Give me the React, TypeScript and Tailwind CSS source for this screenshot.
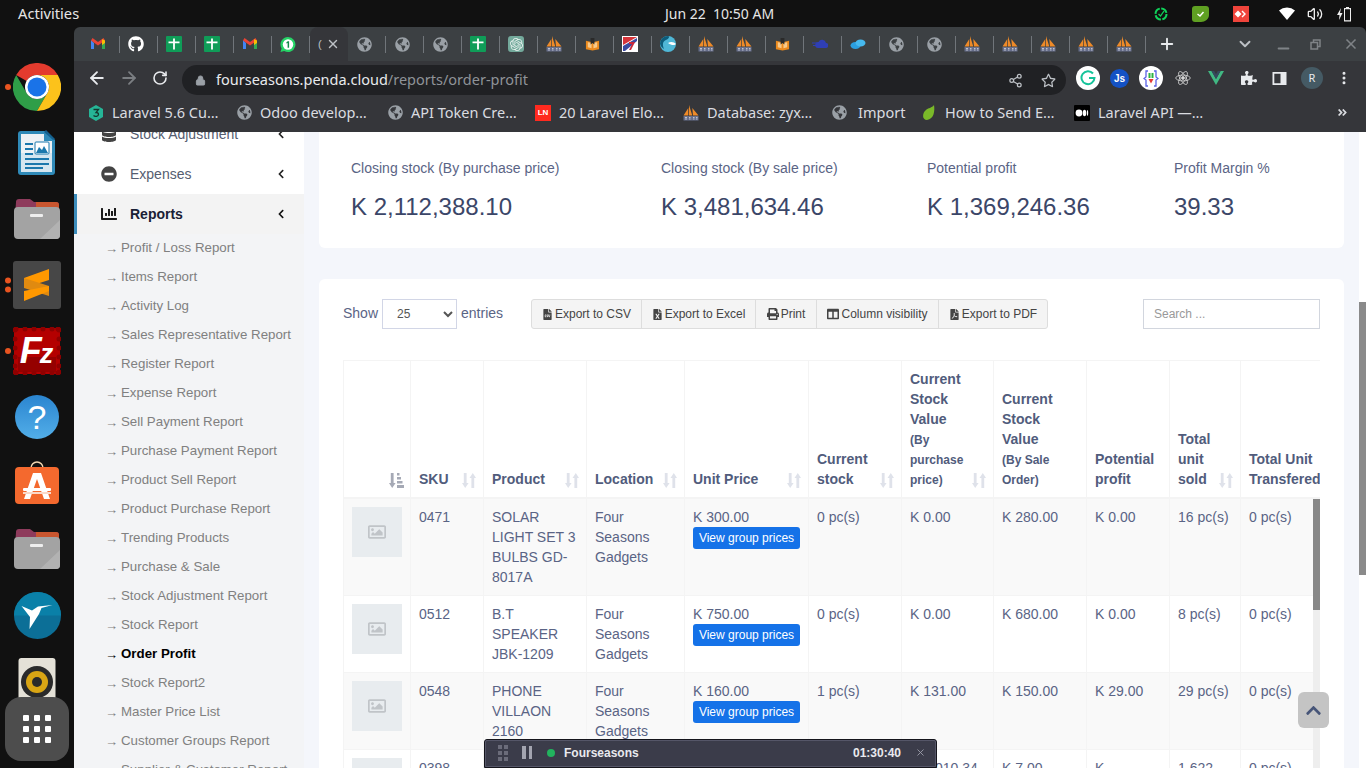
import React from "react";
import {
  FaAngleDoubleRight,
  FaChartBar,
  FaChevronLeft,
  FaChevronUp,
  FaColumns,
  FaDatabase,
  FaFileCsv,
  FaFileExcel,
  FaFilePdf,
  FaGithub,
  FaGlobeAmericas,
  FaMinusCircle,
  FaPrint,
  FaPuzzlePiece,
  FaRegImage,
  FaRegStar,
} from "react-icons/fa";
import { SiOpenai } from "react-icons/si";
import { ArrowLeft, ArrowRight, ChevronDown, Lock, Minus, MoreVertical, Plus, RotateCw, Share2, Volume2, X } from "lucide-react";

const Gmail = () => (
  <svg width="16" height="16" viewBox="0 0 16 16">
    <path d="M1 4v9h3V7z" fill="#4285f4" />
    <path d="M12 7v6h3V4z" fill="#34a853" />
    <path d="M1 4.500 8 9.500l7-5L13.500 2 8 6 2.500 2z" fill="#ea4335" />
    <path d="M12 3.200 15 4.500V7l-3 2z" fill="#fbbc04" />
  </svg>
);
const Sheets = () => (
  <svg width="16" height="16" viewBox="0 0 16 16">
    <rect width="16" height="16" rx="1" fill="#0f9d58" />
    <path d="M7.100 2.500h1.800v3h4.600v1.800H8.900v6.200H7.100V7.300H2.500V5.500h4.600z" fill="#fff" />
  </svg>
);
const Whatsapp = () => (
  <svg width="17" height="17" viewBox="0 0 16 16">
    <path d="M8 .500a7.500 7.500 0 0 0-6.400 11.400L.500 15.500l3.700-1A7.500 7.500 0 1 0 8 .500z" fill="#25d366" />
    <circle cx="8" cy="8" r="5.200" fill="#fff" />
    <path d="M7.800 4.800h1.300v6.400H7.600V6.400l-1.200.5V5.700z" fill="#128c4b" />
  </svg>
);
const Globe = () => <FaGlobeAmericas size={15} color="#9aa0a6" />;
const Sail = () => (
  <svg width="16" height="16" viewBox="0 0 16 16">
    <path d="M.500 10.500 5.300 3v7.500zM6 10.500V0l3.300 10.500zM10 10.500 9.300 3 15.500 10.500z" fill="#ee8a28" />
    <rect x="0.500" y="11" width="15" height="4.500" fill="#676f8c" />
    <path d="M2 12.500h2M2 14h2M6 12.500h1.500M6 14h1.500M10 12.500h1.500M10 14h1.500M13 12.500h1.500M13 14h1.500" stroke="#d5d8e0" strokeWidth=".8" />
  </svg>
);
const Book = () => (
  <svg width="15" height="15" viewBox="0 0 16 16">
    <path d="M1 4l7 1.500L15 4v9l-7 1.500L1 13z" fill="#ec8a1d" />
    <path d="M3 5.500l4 1v5.500l-4-1zM13 5.500l-4 1v5.500l4-1z" fill="#f7c98a" />
    <path d="M6 1h4v7l-2-1.500L6 8z" fill="#2a2a2a" />
  </svg>
);
const Flag = () => (
  <svg width="16" height="16" viewBox="0 0 16 16">
    <rect width="16" height="16" fill="#fff" />
    <path d="M1 1h14L1 9z" fill="#d6343a" />
    <path d="M1 10 15 2v3L3 15H1z" fill="#3b4aa0" />
    <path d="M7 6h6l-4 8H7l3-6H7z" fill="#c9283a" />
  </svg>
);
const Swirl = () => (
  <svg width="16" height="16" viewBox="0 0 16 16">
    <circle cx="8" cy="8" r="8" fill="#4fb7d6" />
    <path d="M0 8a8 8 0 0 1 8-8c2 0 1 3-2 4S2 8 4 13A8 8 0 0 1 0 8z" fill="#0d5c7a" />
    <path d="M8 7c3-2 6-1 8 1-1 1-4 2-8-1z" fill="#fff" />
  </svg>
);
const Cloud = () => (
  <svg width="16" height="16" viewBox="0 0 16 16">
    <path d="M6 12a3 3 0 0 1 .5-6A4 4 0 0 1 14 7a2.500 2.500 0 0 1-.5 5z" fill="#2f3fb5" />
    <path d="M0 7h5M1 9.500h4" stroke="#2f3fb5" strokeWidth="1.200" />
  </svg>
);
const Blobs = () => (
  <svg width="16" height="16" viewBox="0 0 16 16">
    <ellipse cx="5.500" cy="9.500" rx="5" ry="3.500" fill="#2b9fe0" />
    <ellipse cx="10.500" cy="7" rx="5" ry="3.500" fill="#46b9ee" />
  </svg>
);
const OpenAi = () => (
  <span className="flex h-4 w-4 items-center justify-center rounded-[3px] bg-[#74aa9c]">
    <SiOpenai size={13} color="#e8f2ef" />
  </span>
);

const tabs: React.ReactNode[] = [
  <Gmail />, <FaGithub size={16} color="#fff" />, <Sheets />, <Sheets />, <Gmail />, <Whatsapp />, null,
  <Globe />, <Globe />, <Globe />, <Sheets />, <OpenAi />, <Sail />, <Book />, <Flag />, <Swirl />, <Sail />, <Sail />,
  <Book />, <Cloud />, <Blobs />, <Globe />, <Globe />, <Sail />, <Sail />, <Sail />, <Sail />, <Sail />,
];

const bookmarks: { icon: React.ReactNode; label: string; w: string }[] = [
  {
    icon: (
      <svg width="16" height="16" viewBox="0 0 16 16">
        <path d="M8 0l7 4v8l-7 4-7-4V4z" fill="#26b597" />
        <path d="M5.500 4.500h5L8 7.500c2 0 2.500 1 2.500 2 0 2-3.500 2.500-5 1" fill="none" stroke="#14382f" strokeWidth="1.300" />
      </svg>
    ),
    label: "Laravel 5.6 Cu…",
    w: "w-[148px]",
  },
  { icon: <Globe />, label: "Odoo develop…", w: "w-[151px]" },
  { icon: <Globe />, label: "API Token Cre…", w: "w-[148px]" },
  {
    icon: (
      <span className="flex h-4 w-4 items-center justify-center bg-[#ff2a1f] font-['Liberation_Sans'] text-[8px] font-bold text-white">
        LN
      </span>
    ),
    label: "20 Laravel Elo…",
    w: "w-[148px]",
  },
  { icon: <Sail />, label: "Database: zyx…", w: "w-[148px]" },
  { icon: <Globe />, label: "Import", w: "w-[90px]" },
  {
    icon: (
      <svg width="16" height="16" viewBox="0 0 16 16">
        <path d="M13 0c1 6 0 14-7 15C1 15 1 8 5 5c2-2 6-2 8-5z" fill="#7ab929" />
      </svg>
    ),
    label: "How to Send E…",
    w: "w-[153px]",
  },
  {
    icon: (
      <svg width="16" height="16" viewBox="0 0 16 16">
        <rect width="16" height="16" rx="1" fill="#000" />
        <circle cx="5" cy="8" r="3.400" fill="#fff" />
        <ellipse cx="10.500" cy="8" rx="1.700" ry="3.200" fill="#fff" />
        <ellipse cx="13.500" cy="8" rx=".7" ry="2.900" fill="#fff" />
      </svg>
    ),
    label: "Laravel API —…",
    w: "w-[140px]",
  },
];

const Chrome = () => (
  <svg width="48" height="48" viewBox="0 0 48 48">
    <path d="M3.200 12 13.600 30A12 12 0 0 0 34.400 30L24 48A24 24 0 0 1 3.200 12z" fill="#2f9e48" />
    <path d="M44.800 12A24 24 0 0 1 24 48L34.400 30A12 12 0 0 0 24 12z" fill="#fcc21b" />
    <path d="M3.200 12A24 24 0 0 1 44.800 12H24A12 12 0 0 0 13.600 18z" fill="#e33b2e" />
    <circle cx="24" cy="24" r="12" fill="#fff" />
    <circle cx="24" cy="24" r="9.500" fill="#1a73e8" />
  </svg>
);
const Writer = () => (
  <svg width="38" height="46" viewBox="0 0 38 46">
    <path d="M3 1h25l9 9v32a3 3 0 0 1-3 3H3a3 3 0 0 1-3-3V4a3 3 0 0 1 3-3z" fill="#2f8ab8" />
    <path d="M3 4h23v7h8v31H3z" fill="#eef2f5" />
    <path d="M3 23h31v19H3z" fill="#d5e6f0" />
    <path d="M28 0l9 9-2 1-9-8z" fill="#14618f" />
    <path d="M7 13h8v2H7zM7 18h8v2H7zM7 23h8v2H7zM7 28h24v2H7zM7 33h24v2H7zM7 37h18v2H7z" fill="#1b78ad" />
    <rect x="17" y="12" width="14" height="12" rx="1" fill="#fff" stroke="#1b78ad" />
    <path d="M18 23l3-6 3 3 2-4 4 7z" fill="#1b78ad" />
  </svg>
);
const Folder = () => (
  <svg width="46" height="42" viewBox="0 0 46 42">
    <path d="M2 4a3 3 0 0 1 3-3h11l4 3h22a3 3 0 0 1 3 3v12H1z" fill="#8e3b5c" />
    <path d="M22 4h20a3 3 0 0 1 3 3v8H22z" fill="#c9562f" />
    <rect x="0" y="9" width="46" height="32" rx="4" fill="#a3a3a3" />
    <path d="M46 22v15a4 4 0 0 1-4 4H26z" fill="#b2b2b2" />
    <rect x="16" y="16" width="13" height="3" rx="1" fill="#eee" />
  </svg>
);
const Sublime = () => (
  <span className="flex h-12 w-12 items-center justify-center rounded-[3px] bg-[#474747]">
    <svg width="26" height="32" viewBox="0 0 26 32">
      <path d="M25 0v11L0 19V9z" fill="#ff9800" />
      <path d="M0 9 25 17v10L0 19z" fill="#e08a10" />
      <path d="M25 17v5L0 32V22z" fill="#ff9800" />
    </svg>
  </span>
);
const FileZilla = () => (
  <span className="relative flex h-12 w-12 items-center justify-center">
    <svg className="absolute inset-0" width="48" height="48" viewBox="0 0 48 48">
      <rect x="1" y="1" width="46" height="46" fill="#b40000" />
      <rect x="5" y="30" width="38" height="15" fill="#950000" />
      {[3, 12, 21, 30, 39, 45].map((p) => (
        <g key={p} fill="#8f0000">
          <circle cx={p} cy="2" r="2.500" />
          <circle cx={p} cy="46" r="2.500" />
          <circle cx="2" cy={p} r="2.500" />
          <circle cx="46" cy={p} r="2.500" />
        </g>
      ))}
    </svg>
    <span className="relative -ml-[3px] font-['Liberation_Sans'] text-[36px] leading-none font-bold italic tracking-[-2px] text-white">
      F<span className="text-[27px]">z</span>
    </span>
  </span>
);
const Help = () => (
  <span className="flex h-[44px] w-[44px] items-center justify-center rounded-full bg-gradient-to-b from-[#2a85d0] to-[#52aee8] font-['Liberation_Sans'] text-[34px] leading-none text-white">
    ?
  </span>
);
const Store = () => (
  <svg width="46" height="44" viewBox="0 0 46 44">
    <path d="M17 10V7a6 6 0 0 1 12 0v3" fill="none" stroke="#f2d6b0" strokeWidth="1.500" />
    <rect y="6" width="44" height="37" x="1" rx="4" fill="#f4692e" />
    <path d="M19 12h8l9 26h-6l-7-20-7 20h-6z" fill="#fff" />
    <rect x="9" y="27" width="28" height="3" rx="1" fill="#fff" />
    <rect x="9" y="31" width="28" height="2" fill="#fbd9c9" />
  </svg>
);
const Bird = () => (
  <svg width="47" height="47" viewBox="0 0 47 47">
    <circle cx="23.500" cy="23.500" r="23.500" fill="#0c6f97" />
    <path d="M0 23.500A23.500 23.500 0 0 1 47 23.500z" fill="#0a80a8" />
    <path d="M7.500 14 18 18.500 24 14.500 38.500 13 27.500 16 25 22 15.500 37 16 25z" fill="#fff" />
  </svg>
);
const Speaker = () => (
  <svg width="38" height="46" viewBox="0 0 38 46">
    <rect width="37" height="46" x="0.500" rx="3" fill="#e4e1d7" />
    <circle cx="19" cy="24" r="16" fill="#2a2a2a" />
    <circle cx="19" cy="24" r="11" fill="#d9a514" />
    <circle cx="19" cy="24" r="5" fill="#2a2a2a" />
  </svg>
);

const dock: { node: React.ReactNode; dots: number }[] = [
  { node: <Chrome />, dots: 1 },
  { node: <Writer />, dots: 0 },
  { node: <Folder />, dots: 0 },
  { node: <Sublime />, dots: 2 },
  { node: <FileZilla />, dots: 1 },
  { node: <Help />, dots: 0 },
  { node: <Store />, dots: 0 },
  { node: <Folder />, dots: 0 },
  { node: <Bird />, dots: 0 },
  { node: <Speaker />, dots: 0 },
];

const subMenu = [
  "Profit / Loss Report",
  "Items Report",
  "Activity Log",
  "Sales Representative Report",
  "Register Report",
  "Expense Report",
  "Sell Payment Report",
  "Purchase Payment Report",
  "Product Sell Report",
  "Product Purchase Report",
  "Trending Products",
  "Purchase & Sale",
  "Stock Adjustment Report",
  "Stock Report",
  "Order Profit",
  "Stock Report2",
  "Master Price List",
  "Customer Groups Report",
  "Supplier & Customer Report",
];

const exportButtons = [
  { icon: <FaFileCsv size={11} />, label: "Export to CSV", w: "w-[109px]" },
  { icon: <FaFileExcel size={11} />, label: "Export to Excel", w: "w-[114px]" },
  { icon: <FaPrint size={12} />, label: "Print", w: "w-[61px]" },
  { icon: <FaColumns size={12} />, label: "Column visibility", w: "w-[122px]" },
  { icon: <FaFilePdf size={11} />, label: "Export to PDF", w: "w-[109px]" },
];

const stats = [
  { label: "Closing stock (By purchase price)", value: "K 2,112,388.10" },
  { label: "Closing stock (By sale price)", value: "K 3,481,634.46" },
  { label: "Potential profit", value: "K 1,369,246.36" },
  { label: "Profit Margin %", value: "39.33" },
];

const rows = [
  { sku: "0471", product: ["SOLAR", "LIGHT SET 3", "BULBS GD-", "8017A"], price: "K 300.00", stock: "0 pc(s)", pv: "K 0.00", sv: "K 280.00", profit: "K 0.00", sold: "16 pc(s)", btn: true },
  { sku: "0512", product: ["B.T", "SPEAKER", "JBK-1209"], price: "K 750.00", stock: "0 pc(s)", pv: "K 0.00", sv: "K 680.00", profit: "K 0.00", sold: "8 pc(s)", btn: true },
  { sku: "0548", product: ["PHONE", "VILLAON", "2160"], price: "K 160.00", stock: "1 pc(s)", pv: "K 131.00", sv: "K 150.00", profit: "K 29.00", sold: "29 pc(s)", btn: true },
  { sku: "0398", product: ["USB CABLE"], price: "K 30.00", stock: "1,278 pc(s)", pv: "K 7,010.34", sv: "K 7.00", profit: "K", sold: "1,622", btn: false },
];

const SortIcon = () => (
  <svg className="absolute right-[7px] bottom-[9px]" width="14" height="15" viewBox="0 0 14 15" fill="#dfe2ea">
    <path d="M1.800 0h2.800v10h2L3.200 15 0 10h1.800zM9.400 15h2.800V5h1.800L10.800 0 7.500 5h1.900z" />
  </svg>
);

const ActiveSortIcon = () => (
  <svg className="absolute right-[6px] bottom-[9px]" width="15" height="15" viewBox="0 0 15 15" fill="#a5a9b5">
    <path d="M1.800 0h2.800v10h2L3.200 15 0 10h1.800zM8 0h2.500v2.500H8zM8 4h4v2.500H8zM8 8h5.500v2.500H8zM8 12h7v3H8z" />
  </svg>
);

function Th({ children, sort = true }: { children: React.ReactNode; sort?: boolean }) {
  return (
    <th className="relative border-l border-[#f4f4f4] p-2 text-left align-bottom text-sm leading-5 font-bold">
      {children}
      {sort && <SortIcon />}
    </th>
  );
}

const Td = ({ children }: { children: React.ReactNode }) => (
  <td className="border-l border-[#f4f4f4] p-2 align-top">{children}</td>
);

export default function App() {
  return (
    <div className="relative flex h-[768px] w-[1366px] flex-col overflow-hidden bg-[#111] font-['Liberation_Sans',sans-serif]">
      {/* gnome top bar */}
      <div className="relative flex h-[27px] shrink-0 items-center font-['Noto_Sans',sans-serif] text-[14.700px] text-[#e6e6e6]">
        <span className="ml-[18px]">Activities</span>
        <span className="absolute left-[665px] text-sm whitespace-pre">Jun 22  10:50 AM</span>
        <div className="ml-auto flex items-center">
          <svg className="mr-[24px]" width="14" height="14" viewBox="0 0 14 14" fill="none" stroke="#0fd35a" strokeWidth="2">
            <circle cx="7" cy="7" r="5.500" strokeDasharray="7 1.500" />
            <path d="M4.500 7 6.500 9 10 4" strokeWidth="1.300" />
          </svg>
          <svg className="mr-[24px]" width="17" height="16" viewBox="0 0 17 16">
            <path d="M3 0h11a3 3 0 0 1 3 3v6c0 4-4 7-8 7H3a3 3 0 0 1-3-3V3a3 3 0 0 1 3-3z" fill="#5fa022" />
            <path d="M5.500 8 8 10l3.500-4" fill="none" stroke="#fff" strokeWidth="1.500" />
          </svg>
          <svg className="mr-[30px]" width="16" height="16" viewBox="0 0 16 16">
            <rect width="16" height="16" fill="#ef443b" />
            <path d="M5 4.500 8.500 8 5 11.500 1.500 8zM9.500 4.500 13 8l-3.500 3.500L8.500 10.500 11 8 8.500 5.500z" fill="#fff" />
          </svg>
          <svg className="mr-[12px]" width="16" height="13" viewBox="0 0 16 13">
            <path d="M0 3.500a12 12 0 0 1 16 0L8 13z" fill="#fff" />
          </svg>
          <Volume2 className="mr-[14px]" size={16} color="#eee" />
          <svg className="mr-[13px]" width="16" height="16" viewBox="0 0 16 16" fill="#eee">
            <path d="M4 2 0 9h2.500L2 14l3.500-7H3z" />
            <path d="M9 1h3v1h2v13.500H7V2h2zm-1 2.200v11h5v-11z" />
          </svg>
        </div>
      </div>

      <div className="flex min-h-0 flex-1">
        {/* ubuntu dock */}
        <div className="flex w-[74px] shrink-0 flex-col items-center pt-[27px]">
          {dock.map((item, i) => (
            <div key={i} className="relative flex h-[66px] w-full shrink-0 items-center justify-center">
              {item.node}
              {item.dots > 0 && (
                <div className="absolute top-1/2 left-[5px] flex -translate-y-1/2 flex-col gap-[3px]">
                  {item.dots > 1 && <span className="h-[6px] w-[6px] rounded-full bg-[#e95420]" />}
                  <span className="h-[6px] w-[6px] rounded-full bg-[#e95420]" />
                </div>
              )}
            </div>
          ))}
        </div>

        {/* browser window */}
        <div className="flex min-w-0 flex-1 flex-col">
          <div className="flex h-[34px] shrink-0 items-center rounded-t-[6px] bg-[#3c4043] pl-2">
            {tabs.map((icon, i) =>
              icon === null ? (
                <div key={i} className="flex h-[34px] w-[38px] shrink-0 items-center justify-between rounded-t-lg bg-[#35363a] pr-[8px] pl-[8px] text-[#bdc1c6]">
                  <span className="text-[11px]">(</span>
                  <X size={14} strokeWidth={2.500} />
                </div>
              ) : (
                <div key={i} className="flex h-[17px] w-[38px] shrink-0 items-center border-r border-[#70757a] pl-2">
                  <span className="flex w-4 justify-center">{icon}</span>
                </div>
              ),
            )}
            <Plus className="ml-[12px]" size={18} color="#e8eaed" strokeWidth={2.500} />
            <ChevronDown className="ml-[60px]" size={18} color="#bdc1c6" strokeWidth={2.500} />
            <Minus className="mt-[8px] ml-[21px]" size={17} color="#7f8387" strokeWidth={2.500} />
            <svg className="ml-[18px]" width="11" height="11" viewBox="0 0 11 11" fill="none" stroke="#7f8387" strokeWidth="1.500">
              <rect x="1" y="3.500" width="6.500" height="6.500" />
              <path d="M3.500 3V1H10v6.500H8" />
            </svg>
            <X className="ml-[22px]" size={16} color="#7f8387" strokeWidth={2.500} />
          </div>

          <div className="flex h-[34px] shrink-0 items-center bg-[#35363a] pl-[13px]">
            <ArrowLeft size={20} color="#e8eaed" strokeWidth={2.200} />
            <ArrowRight className="ml-[12px]" size={20} color="#7b7e82" strokeWidth={2.200} />
            <RotateCw className="ml-[13px]" size={16} color="#e8eaed" strokeWidth={2.400} />
            <div className="ml-[14px] flex h-[30px] w-[884px] items-center self-end rounded-full bg-[#202124] pr-[10px] pl-[13px] font-['Noto_Sans',sans-serif] text-[14.500px]">
              <Lock size={11} color="#9aa0a6" fill="#9aa0a6" />
              <span className="ml-[10px] text-[#e8eaed]">fourseasons.penda.cloud</span>
              <span className="text-[#8f9398]">/reports/order-profit</span>
              <Share2 className="mr-[18px] ml-auto" size={15} color="#bdc1c6" />
              <FaRegStar size={15} color="#bdc1c6" />
            </div>
            <span className="ml-[10px] flex h-6 w-6 items-center justify-center rounded-full bg-white">
              <svg width="16" height="16" viewBox="0 0 16 16" fill="none" stroke="#15c39a" strokeWidth="2">
                <path d="M13 3.500A6.500 6.500 0 1 0 14.500 8H9" />
              </svg>
            </span>
            <span className="ml-[10px] flex h-[19px] w-[19px] items-center justify-center rounded-full bg-[#1452c4] text-[10px] font-bold text-white">Js</span>
            <span className="ml-[10px] flex h-6 w-6 items-center justify-center rounded-full bg-white">
              <svg width="16" height="17" viewBox="0 0 16 17">
                <path d="M5 1H3v6L1 8.500 3 10v6h2M11 1h2v6l2 1.500L13 10v6h-2" fill="none" stroke="#5b63e6" strokeWidth="1.300" />
                <rect x="5.500" y="3" width="2" height="5" fill="#2fb344" />
                <rect x="8.500" y="3" width="2" height="5" fill="#2fb344" />
                <path d="M5.500 9h5L8 13.500z" fill="#e53935" />
              </svg>
            </span>
            <svg className="ml-[12px]" width="16" height="16" viewBox="-11 -11 22 22" fill="none" stroke="#d5d5d5" strokeWidth="1.100">
              <circle r="2" fill="#d5d5d5" />
              <ellipse rx="10" ry="4" />
              <ellipse rx="10" ry="4" transform="rotate(60)" />
              <ellipse rx="10" ry="4" transform="rotate(120)" />
            </svg>
            <svg className="ml-[17px]" width="16" height="14" viewBox="0 0 16 14">
              <path d="M0 0h3.500L8 8l4.500-8H16L8 14z" fill="#41b883" />
              <path d="M3.500 0h2.700L8 3.200 9.800 0h2.700L8 8z" fill="#35495e" />
            </svg>
            <FaPuzzlePiece className="ml-[17px]" size={16} color="#e8eaed" />
            <svg className="ml-[15px]" width="15" height="13" viewBox="0 0 14 13">
              <path d="M0 0h14v13H0zM1.800 1.800v9.400H8V1.800z" fill="#e8eaed" fillRule="evenodd" />
            </svg>
            <span className="ml-[14px] flex h-[22px] w-[22px] items-center justify-center rounded-full bg-[#455a64] font-['Noto_Sans',sans-serif] text-[11px] text-[#e8eaed]">R</span>
            <MoreVertical className="ml-[13px]" size={16} color="#e8eaed" strokeWidth={2.500} />
          </div>

          <div className="flex h-[37px] shrink-0 items-center bg-[#35363a] pb-[2px] pl-[14px] font-['Noto_Sans',sans-serif] text-[14.500px] text-[#dadce0]">
            {bookmarks.map((b) => (
              <div key={b.label} className={`flex shrink-0 items-center ${b.label === "Import" ? "gap-[11px]" : "gap-2"} ${b.w}`}>
                <span className="flex w-4 shrink-0 justify-center">{b.icon}</span>
                <span className="whitespace-nowrap">{b.label}</span>
              </div>
            ))}
            <FaAngleDoubleRight className="ml-[123px]" size={11} color="#dadce0" />
          </div>

          <div className="relative flex min-h-0 flex-1 overflow-hidden bg-[#f4f6fb]">
            {/* sidebar */}
            <div className="w-[230px] shrink-0 overflow-hidden bg-white text-sm text-[#555d70]">
              <div className="-mt-[18px]">
                <div className="flex h-10 items-center pl-[27px]">
                  <FaDatabase className="w-4" size={16} color="#444" />
                  <span className="ml-[13px]">Stock Adjustment</span>
                  <FaChevronLeft className="mr-[18px] ml-auto" size={10} color="#222" />
                </div>
                <div className="flex h-10 items-center pl-[27px]">
                  <FaMinusCircle className="w-4" size={16} color="#444" />
                  <span className="ml-[13px]">Expenses</span>
                  <FaChevronLeft className="mr-[18px] ml-auto" size={10} color="#222" />
                </div>
                <div className="flex h-10 items-center border-l-[3px] border-[#3c8dbc] bg-[#f3f3f3] pl-[24px] font-bold text-[#1a2035]">
                  <FaChartBar className="w-4" size={16} color="#1a1a1a" />
                  <span className="ml-[13px]">Reports</span>
                  <FaChevronLeft className="mr-[18px] ml-auto" size={10} color="#111" />
                </div>
                <div className="bg-[#f3f4f6] text-[13.300px] text-[#808080]">
                  {subMenu.map((item) => (
                    <div
                      key={item}
                      className={`flex h-[29px] items-center pl-[31px] whitespace-nowrap ${item === "Order Profit" ? "font-bold text-black" : ""}`}
                    >
                      <span className="w-[16px] pt-[2px] text-[13px] font-normal">→</span>
                      {item}
                    </div>
                  ))}
                </div>
              </div>
            </div>

            {/* page */}
            <div className="ml-[15px] flex w-[1025px] shrink-0 flex-col text-sm text-[#5a6485]">
              <div className="grid h-[116px] shrink-0 grid-cols-[310px_266px_247px_1fr] rounded-b-md bg-white pt-[27px] pl-8">
                {stats.map((s) => (
                  <div key={s.label}>
                    <div className="leading-[18px]">{s.label}</div>
                    <div className="mt-[15px] text-2xl leading-[30px] text-[#3b4668]">{s.value}</div>
                  </div>
                ))}
              </div>

              <div className="mt-[31px] flex-1 rounded-t-md bg-white px-6 pt-5">
                <div className="flex h-[30px] items-center">
                  <div className="flex w-[188px] items-center">
                    <span className="pb-[2px]">Show</span>
                    <select className="mx-1 h-[30px] w-[75px] border border-[#d2d6e6] bg-white pl-[10px] text-xs text-[#555] outline-none">
                      <option>25</option>
                    </select>
                    <span className="pb-[2px]">entries</span>
                  </div>
                  <div className="flex h-[30px] overflow-hidden rounded-[3px] border border-[#ddd] bg-[#f4f4f4] text-xs text-[#444]">
                    {exportButtons.map((b, i) => (
                      <div key={b.label} className={`flex items-center justify-center gap-[2px] ${b.w} ${i > 0 ? "border-l border-[#ddd]" : ""}`}>
                        {b.icon}
                        {b.label}
                      </div>
                    ))}
                  </div>
                  <input
                    placeholder="Search ..."
                    className="ml-auto h-[30px] w-[177px] border border-[#d2d6de] px-[10px] text-xs outline-none placeholder:text-[#999]"
                  />
                </div>

                <div className="relative mt-[31px] w-[977px] overflow-hidden">
                  <table className="w-[1010px] table-fixed border-collapse">
                    <colgroup>
                      <col className="w-[67px]" />
                      <col className="w-[73px]" />
                      <col className="w-[103px]" />
                      <col className="w-[98px]" />
                      <col className="w-[124px]" />
                      <col className="w-[93px]" />
                      <col className="w-[92px]" />
                      <col className="w-[93px]" />
                      <col className="w-[83px]" />
                      <col className="w-[71px]" />
                      <col className="w-[113px]" />
                    </colgroup>
                    <thead className="border-t border-b-2 border-[#f4f4f4] text-[#515c7c]">
                      <tr>
                        <th className="relative border-l border-[#f4f4f4] p-2 align-bottom">
                          <ActiveSortIcon />
                        </th>
                        <Th>SKU</Th>
                        <Th>Product</Th>
                        <Th>Location</Th>
                        <Th>Unit Price</Th>
                        <Th>Current<br />stock</Th>
                        <Th>
                          Current<br />Stock<br />Value<br />
                          <span className="text-xs">(By<br />purchase<br />price)</span>
                        </Th>
                        <Th sort={false}>
                          Current<br />Stock<br />Value<br />
                          <span className="text-xs">(By Sale<br />Order)</span>
                        </Th>
                        <Th sort={false}>Potential<br />profit</Th>
                        <Th>Total<br />unit<br />sold</Th>
                        <Th sort={false}><span className="whitespace-nowrap">Total Unit</span><br />Transfered</Th>
                      </tr>
                    </thead>
                    <tbody className="leading-5">
                      {rows.map((r, i) => (
                        <tr key={r.sku} className={`border-b border-[#f4f4f4] ${i % 2 === 0 ? "bg-[#f9f9f9]" : "bg-white"}`}>
                          <td className="border-l border-[#f4f4f4] p-2 align-top">
                            <div className="flex h-[50px] w-[50px] items-center justify-center bg-[#e8ecef]">
                              <FaRegImage size={18} color="#c0c4c8" />
                            </div>
                          </td>
                          <Td>{r.sku}</Td>
                          <Td>{r.product.map((line) => <div key={line} className="whitespace-nowrap">{line}</div>)}</Td>
                          <Td>Four<br />Seasons<br />Gadgets</Td>
                          <Td>
                            {r.price}
                            {r.btn && (
                              <div className="flex h-[22px] w-[107px] items-center justify-center rounded-[3px] bg-[#1572e8] text-xs text-white">
                                View group prices
                              </div>
                            )}
                          </Td>
                          <Td>{r.stock}</Td>
                          <Td>{r.pv}</Td>
                          <Td>{r.sv}</Td>
                          <Td>{r.profit}</Td>
                          <Td>{r.sold}</Td>
                          <Td>0 pc(s)</Td>
                        </tr>
                      ))}
                    </tbody>
                  </table>
                  {/* inner table scrollbar */}
                  <div className="absolute top-[139px] right-0 bottom-0 w-[7px] bg-[#eee]">
                    <div className="h-[111px] bg-[#888]" />
                  </div>
                </div>
              </div>
            </div>

            {/* page scrollbar */}
            <div className="absolute top-0 right-0 bottom-0 w-[7px] bg-white">
              <div className="mt-[170px] h-[273px] bg-[#8a8a8a]" />
            </div>
            {/* back to top */}
            <div className="absolute top-[560px] left-[1224px] flex h-[36px] w-[31px] items-center justify-center rounded-md bg-[#c4c4c4]">
              <FaChevronUp size={17} color="#475578" />
            </div>
          </div>
        </div>
      </div>

      {/* apps button */}
      <div className="absolute bottom-[7px] left-[5px] grid h-16 w-16 grid-cols-3 place-items-center rounded-2xl bg-[#4d4d4d] p-[15px]">
        {Array.from({ length: 9 }).map((_, i) => (
          <span key={i} className="h-[6px] w-[6px] rounded-[1px] bg-white" />
        ))}
      </div>

      {/* recording bar */}
      <div className="absolute bottom-0 left-[484px] flex h-[29px] w-[453px] items-center rounded-t-[3px] border border-[#15151c] bg-[#3b3c4a] pb-[2px] text-xs font-bold text-[#e9e9ee] outline outline-[#555668] -outline-offset-2">
        <div className="ml-[13px] grid grid-cols-2 gap-[2px]">
          {Array.from({ length: 6 }).map((_, i) => (
            <span key={i} className="h-[4px] w-[4px] bg-[#6b6c7a]" />
          ))}
        </div>
        <div className="ml-[14px] flex gap-[3px]">
          <span className="h-[13px] w-[3.500px] bg-[#a3a4b0]" />
          <span className="h-[13px] w-[3.500px] bg-[#a3a4b0]" />
        </div>
        <span className="ml-[15px] h-[8px] w-[8px] rounded-full bg-[#22b35e]" />
        <span className="ml-[9px]">Fourseasons</span>
        <span className="ml-auto">01:30:40</span>
        <X className="mr-[10px] ml-[14px]" size={11} color="#9a9ba8" />
      </div>
    </div>
  );
}
